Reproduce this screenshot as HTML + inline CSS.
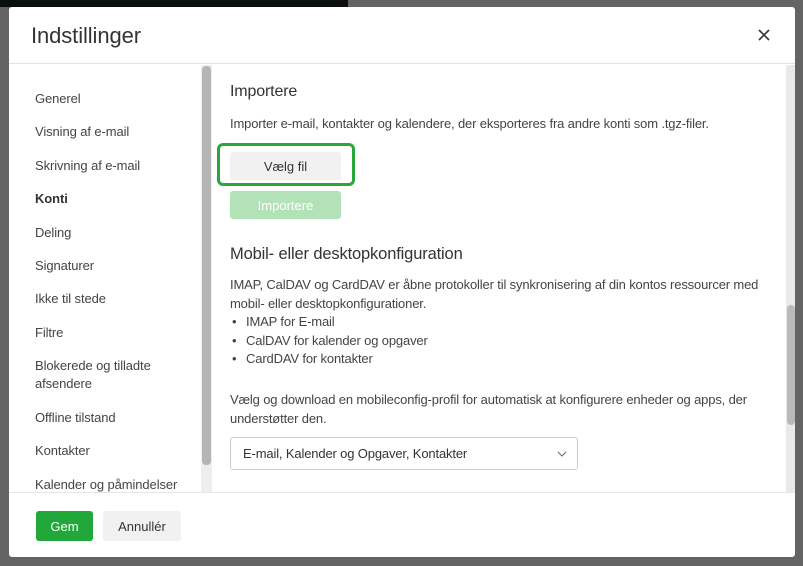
<!DOCTYPE html>
<html><head><meta charset="utf-8"><style>
*{box-sizing:border-box;margin:0;padding:0}
body{width:803px;height:566px;overflow:hidden;background:#646464;font-family:"Liberation Sans",sans-serif;color:#333;position:relative}
.topbar{position:absolute;left:0;top:0;width:348px;height:7px;background:#0a0f0c}
.dlg{position:absolute;left:9px;top:7px;width:786px;height:550px;background:#fff;border-radius:3px;overflow:hidden}
.hdr{position:absolute;left:0;top:0;width:100%;height:57px;border-bottom:1px solid #e3e3e3}
.hdr h1{position:absolute;left:22px;top:16px;font-weight:normal;font-size:22px;color:#333;letter-spacing:-0.1px}
.close{position:absolute;left:748px;top:21px}
.side{position:absolute;left:0;top:58px;width:192px;height:427px}
.side div{position:absolute;left:26px;font-size:13px;color:#444;line-height:18px;letter-spacing:-0.1px}
.sb1{position:absolute;left:192px;top:58px;width:11px;height:427px;background:#eee}
.sb1 i{position:absolute;left:1px;top:1px;width:9px;height:399px;background:#b5b5b5;border-radius:4px}
.sb2{position:absolute;left:777px;top:58px;width:9px;height:427px;background:#e9e9e9}
.sb2 i{position:absolute;left:1px;top:240px;width:8px;height:120px;background:#b9b9b9;border-radius:4px}
.c{position:absolute;left:221px;font-size:13px;color:#444;line-height:18.5px;letter-spacing:-0.15px}
.btn{position:absolute;border-radius:3px;font-size:13px;text-align:center}
.foot{position:absolute;left:0;top:485px;width:100%;height:65px;border-top:1px solid #e6e6e6}
ul{list-style:none}
li:before{content:"•";display:inline-block;width:14px;padding-left:2px}
</style></head><body>
<div class="topbar"></div>
<div class="dlg">
<div class="hdr"><h1>Indstillinger</h1>
<svg class="close" width="14" height="14" viewBox="0 0 14 14"><path d="M2 2L12 12M12 2L2 12" stroke="#333" stroke-width="1.6"/></svg></div>
<div class="side">
<div style="top:25px">Generel</div>
<div style="top:58px">Visning af e-mail</div>
<div style="top:92px">Skrivning af e-mail</div>
<div style="top:125px;font-weight:bold;color:#333">Konti</div>
<div style="top:159px">Deling</div>
<div style="top:192px">Signaturer</div>
<div style="top:225px">Ikke til stede</div>
<div style="top:259px">Filtre</div>
<div style="top:292px">Blokerede og tilladte<br>afsendere</div>
<div style="top:344px">Offline tilstand</div>
<div style="top:377px">Kontakter</div>
<div style="top:411px">Kalender og påmindelser</div>
</div>
<div class="sb1"><i></i></div>
<div class="sb2"><i></i></div>
<div class="c" style="top:76px;font-size:16px;color:#333">Importere</div>
<div class="c" style="top:108px">Importer e-mail, kontakter og kalendere, der eksporteres fra andre konti som .tgz-filer.</div>
<div style="position:absolute;left:208px;top:136px;width:138px;height:43px;border:3px solid #28a83a;border-radius:6px"></div>
<div class="btn" style="left:221px;top:145px;width:111px;height:28px;background:#f1f1f1;line-height:29px;color:#333">Vælg fil</div>
<div class="btn" style="left:221px;top:184px;width:111px;height:28px;background:#b3e2b8;line-height:29px;color:#fff">Importere</div>
<div class="c" style="top:238px;font-size:16.5px;color:#333">Mobil- eller desktopkonfiguration</div>
<div class="c" style="top:269px">IMAP, CalDAV og CardDAV er åbne protokoller til synkronisering af din kontos ressourcer med<br>mobil- eller desktopkonfigurationer.
<ul><li>IMAP for E-mail</li><li>CalDAV for kalender og opgaver</li><li>CardDAV for kontakter</li></ul></div>
<div class="c" style="top:384px">Vælg og download en mobileconfig-profil for automatisk at konfigurere enheder og apps, der<br>understøtter den.</div>
<div style="position:absolute;left:221px;top:430px;width:348px;height:33px;border:1px solid #ccc;border-radius:3px;font-size:13px;line-height:32px;padding-left:12px;color:#333;letter-spacing:-0.15px">E-mail, Kalender og Opgaver, Kontakter
<svg style="position:absolute;right:10px;top:13px" width="10" height="6" viewBox="0 0 10 6"><path d="M1 1L5 5L9 1" stroke="#666" fill="none"/></svg></div>
<div class="foot">
<div class="btn" style="left:27px;top:18px;width:57px;height:30px;background:#22a83a;color:#fff;line-height:31px">Gem</div>
<div class="btn" style="left:94px;top:18px;width:78px;height:30px;background:#f1f1f1;color:#333;line-height:31px">Annullér</div>
</div>
</div>
</body></html>
